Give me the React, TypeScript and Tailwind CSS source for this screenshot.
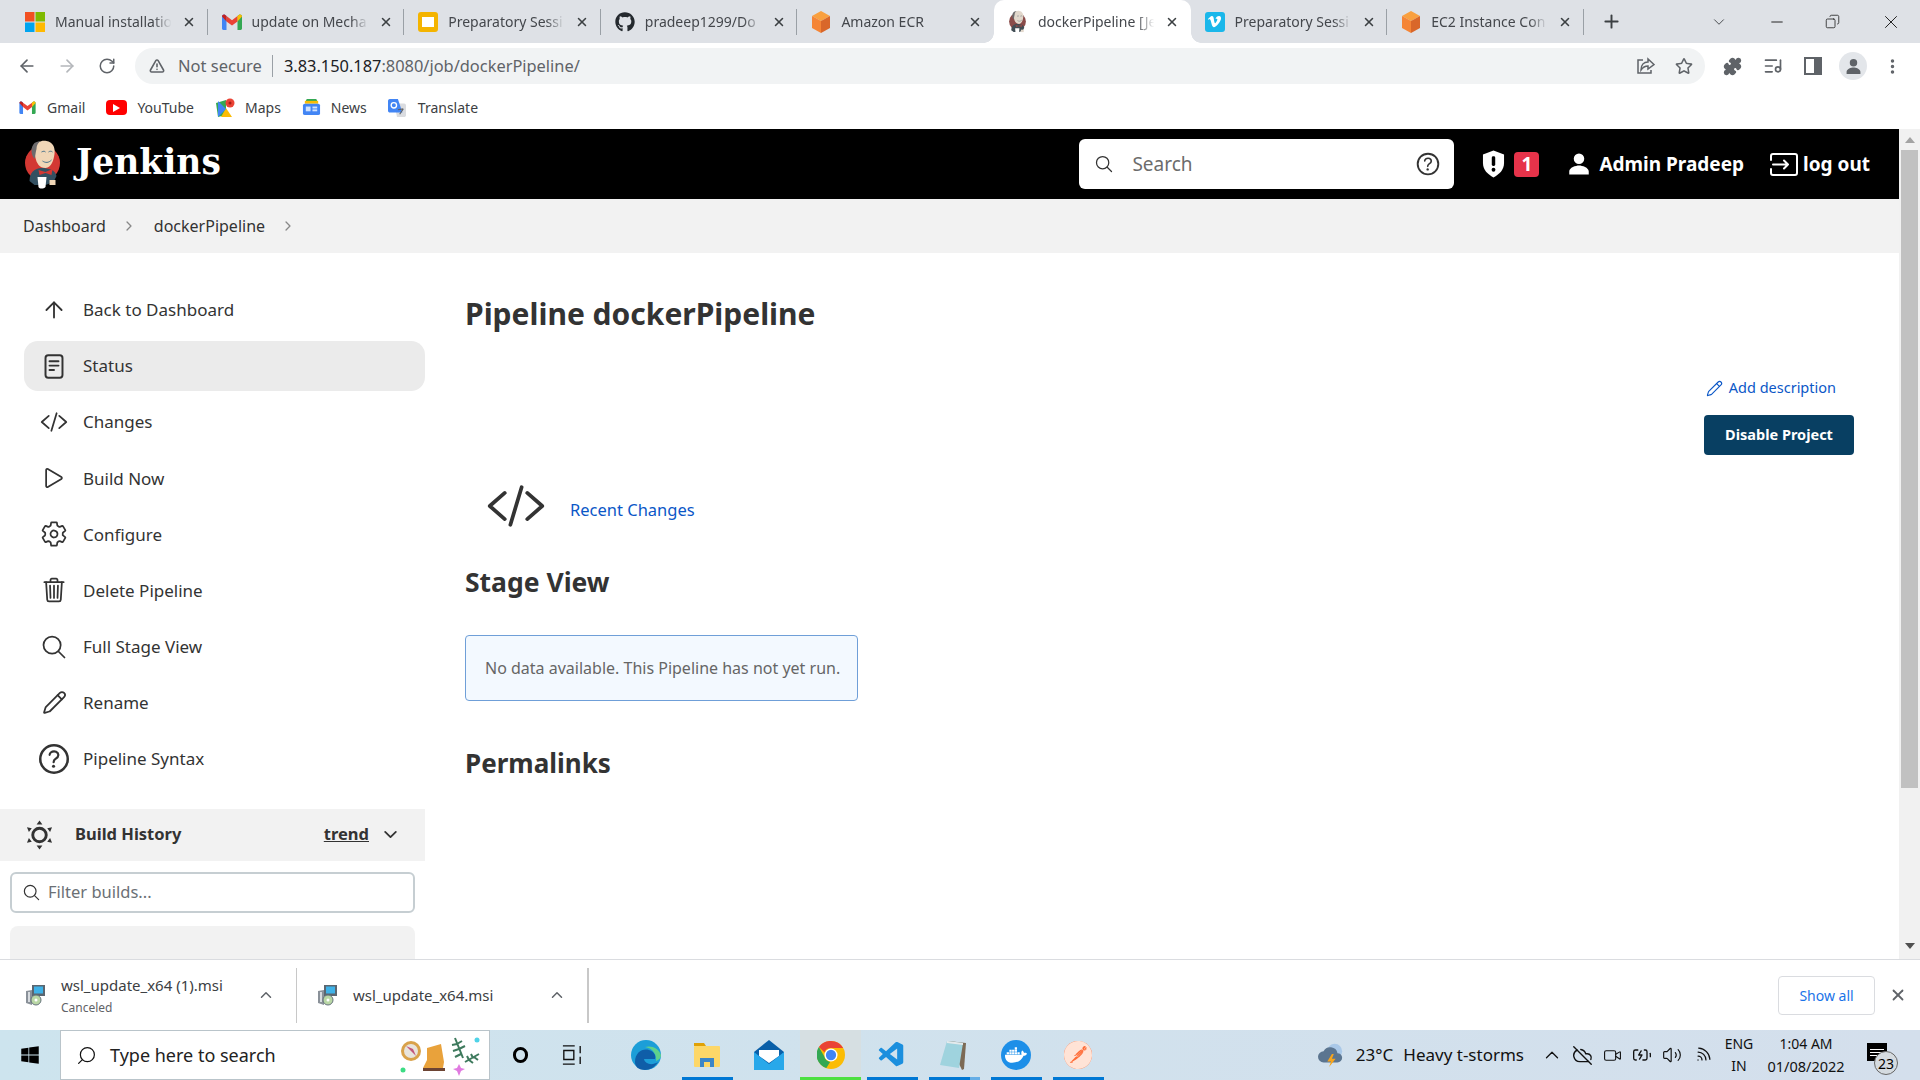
import type { ReactNode } from "react";
import {
  IoCodeSlashOutline,
  IoPlayOutline,
  IoSettingsOutline,
  IoTrashOutline,
  IoSearchOutline,
  IoHelpCircleOutline,
  IoPersonSharp,
  IoChevronForward,
  IoChevronDown,
  IoChevronUp,
} from "react-icons/io5";
import { FaGithub, FaVimeoV, FaWindows, FaDocker, FaRegStar } from "react-icons/fa";
import { SiPostman } from "react-icons/si";
import { VscVscode } from "react-icons/vsc";
import {
  ArrowLeft,
  ArrowRight,
  ArrowUp,
  RotateCw,
  X,
  Plus,
  ChevronDown,
  Minus,
  Copy,
  TriangleAlert,
  Pencil,
  Puzzle,
  ListMusic,
  EllipsisVertical,
  ChevronUp,
  CloudOff,
  Video,
  BatteryCharging,
  Volume2,
  Wifi,
  Search,
} from "lucide-react";

function JenkinsHead({ className }: { className?: string }) {
  return (
    <svg viewBox="0 0 36 50" className={className}>
      <circle cx="18" cy="24" r="17.5" fill="#d33833" />
      <path d="M5 42c0-8 5-13 12-13s14 2 15 8l-3 6-8 3H10z" fill="#335061" />
      <path d="M9 9c3-6 8-8 13-7 6 1 9 6 8 13-1 7-3 13-9 14-6 0-9-5-10-10z" fill="#f0d6b7" />
      <path d="M10 20C6 15 6 8 10 4c2-1 4-2 6-2-3 2-4 5-4 8-1 3-1 7-2 10z" fill="#6d6b6d" />
      <path d="M17 13c2-1 3-1 4 0M24 13c1-1 3-1 4 0M18 22c3 2 6 2 9-1" stroke="#49728b" strokeWidth="1" fill="none" />
      <path d="M14 31l7 2 7-3-1 6-6-2-6 2z" fill="#d33833" />
      <path d="M13 38h9l-1 10c-2 2-6 2-7 0z" fill="#fff" />
      <path d="M25 41h6v5h-6z" fill="#f0d6b7" />
    </svg>
  );
}

function AwsBox() {
  return (
    <svg viewBox="0 0 20 22" className="w-[20px] h-[22px]">
      <path d="M10 0l9 5-9 5-9-5z" fill="#f9a03f" />
      <path d="M1 5l9 5v12l-9-5z" fill="#f58536" />
      <path d="M19 5l-9 5v12l9-5z" fill="#d9672a" />
    </svg>
  );
}

function MsLogo() {
  return (
    <svg viewBox="0 0 20 20" className="w-[20px] h-[20px]">
      <rect width="9.5" height="9.5" fill="#f25022" />
      <rect x="10.5" width="9.5" height="9.5" fill="#7fba00" />
      <rect y="10.5" width="9.5" height="9.5" fill="#00a4ef" />
      <rect x="10.5" y="10.5" width="9.5" height="9.5" fill="#ffb900" />
    </svg>
  );
}

function GmailIcon({ className }: { className?: string }) {
  return (
    <svg viewBox="0 0 20 16" className={className}>
      <path d="M0 2.500C0 .6 2 0 3.200 1L4.500 2v14H1.400C.6 16 0 15.400 0 14.600z" fill="#4285f4" />
      <path d="M20 2.500C20 .6 18 0 16.800 1L15.500 2v14h3.100c.8 0 1.400-.6 1.400-1.400z" fill="#34a853" />
      <path d="M4.500 2L10 6.200 15.500 2v5.500L10 11.600 4.500 7.500z" fill="#ea4335" />
      <path d="M0 2.500L4.500 7.500V2L3.200 1C2 0 0 .6 0 2.500z" fill="#c5221f" />
      <path d="M20 2.500L15.500 7.500V2l1.300-1C18 0 20 .6 20 2.500z" fill="#fbbc04" />
    </svg>
  );
}

function SlidesIcon() {
  return (
    <svg viewBox="0 0 20 20" className="w-[20px] h-[20px]">
      <rect width="20" height="20" rx="3" fill="#f4b400" />
      <rect x="4" y="5" width="12" height="10" fill="#fff" />
    </svg>
  );
}

const tabs: { title: string; icon: ReactNode; active?: boolean; noSep?: boolean }[] = [
  { title: "Manual installatio", icon: <MsLogo /> },
  { title: "update on Mecha", icon: <GmailIcon className="w-[20px] h-[16px]" /> },
  { title: "Preparatory Sessi", icon: <SlidesIcon /> },
  { title: "pradeep1299/Do", icon: <FaGithub className="text-[20px] text-[#24292e]" /> },
  { title: "Amazon ECR", icon: <AwsBox />, noSep: true },
  { title: "dockerPipeline [Je", icon: <JenkinsHead className="w-[19px] h-[24px] grayscale-[60%]" />, active: true, noSep: true },
  {
    title: "Preparatory Sessi",
    icon: (
      <span className="w-[20px] h-[20px] rounded-[3px] bg-[#1ab7ea] flex items-center justify-center">
        <FaVimeoV className="text-[15px] text-white" />
      </span>
    ),
  },
  { title: "EC2 Instance Con", icon: <AwsBox /> },
];

function Tab({ title, icon, active, noSep }: { title: string; icon: ReactNode; active?: boolean; noSep?: boolean }) {
  return (
    <div className={active ? "relative w-[196.6px] h-[43px] shrink-0 bg-white rounded-t-[10px]" : "relative w-[196.6px] h-[43px] shrink-0"}>
      <div className="flex items-center h-full pl-[14px]">
        <span className="w-[20px] flex justify-center shrink-0">{icon}</span>
        <span className="ml-[10px] w-[120px] whitespace-nowrap text-[14px] text-[#44474c] [mask-image:linear-gradient(90deg,#000_82%,transparent_97%)]">
          {title}
        </span>
        <X size={14} strokeWidth={2.6} className="ml-[7px] text-[#3c4043]" />
      </div>
      {!noSep && <span className="absolute right-0 top-[9px] h-[26px] w-px bg-[#9aa0a6]" />}
      {active && (
        <>
          <span className="absolute left-[-10px] bottom-0 w-[10px] h-[10px] bg-[radial-gradient(circle_at_0_0,#dee1e6_9.5px,#fff_10px)]" />
          <span className="absolute right-[-10px] bottom-0 w-[10px] h-[10px] bg-[radial-gradient(circle_at_100%_0,#dee1e6_9.5px,#fff_10px)]" />
        </>
      )}
    </div>
  );
}

function TabStrip() {
  return (
    <div className="h-[43px] bg-[#dee1e6] flex items-center pl-[11px]">
      {tabs.map((t, i) => (
        <Tab key={i} {...t} />
      ))}
      <Plus size={21} strokeWidth={2.2} className="ml-[17px] text-[#3c4043]" />
      <ChevronDown size={18} strokeWidth={1.2} className="ml-[88px] text-[#3c4043]" />
      <Minus size={18} strokeWidth={1.2} className="ml-[40px] text-[#111]" />
      <Copy size={15} strokeWidth={1.2} className="ml-[39px] text-[#111] scale-x-[-1]" />
      <X size={22} strokeWidth={1} className="ml-[40px] text-[#111]" />
    </div>
  );
}

function Toolbar() {
  return (
    <div className="h-[46px] bg-white flex items-center pl-[17px] text-[#5f6368]">
      <ArrowLeft size={20} strokeWidth={2} />
      <ArrowRight size={20} strokeWidth={2} className="ml-[20px] text-[#b4b7bb]" />
      <RotateCw size={18} strokeWidth={2} className="ml-[21px]" />
      <div className="ml-[19px] w-[1570px] h-[36px] rounded-full bg-[#f1f3f4] flex items-center pl-[14px]">
        <TriangleAlert size={16} strokeWidth={2.4} className="text-[#5f6368]" />
        <span className="ml-[13px] text-[16.5px] text-[#5f6368]">Not secure</span>
        <span className="ml-[10px] h-[22px] w-px bg-[#9aa0a6]" />
        <span className="ml-[11px] text-[16.4px] text-[#202124]">
          3.83.150.187<span className="text-[#5f6368]">:8080/job/dockerPipeline/</span>
        </span>
        <svg viewBox="0 0 20 20" className="ml-auto w-[20px] h-[20px]" fill="none" stroke="#5f6368" strokeWidth="1.500">
          <path d="M8 4H3v13h13v-3" />
          <path d="M6 14c0-5 3-8 7-8V3l6 5.500L13 13v-3c-3 0-5 1-7 4z" />
        </svg>
        <FaRegStar className="ml-[20px] mr-[12px] text-[18px]" />
      </div>
      <Puzzle size={19} strokeWidth={2} fill="#5f6368" className="ml-[18px]" />
      <ListMusic size={20} strokeWidth={2} className="ml-[21px]" />
      <svg viewBox="0 0 18 18" className="ml-[21px] w-[18px] h-[18px]">
        <path fillRule="evenodd" d="M0 0h18v18H0zM2 2v14h8V2z" fill="#5f6368" />
      </svg>
      <span className="ml-[17px] w-[28px] h-[28px] rounded-full bg-[#e3e6ea] flex items-center justify-center">
        <IoPersonSharp className="text-[17px] text-[#5f6368]" />
      </span>
      <EllipsisVertical size={19} strokeWidth={2.4} className="ml-[16px]" />
    </div>
  );
}

function Bookmarks() {
  return (
    <div className="h-[40px] pb-[3px] bg-white flex items-center pl-[19px] gap-[21px] text-[14px] text-[#3c4043]">
      <div className="flex items-center gap-[11px]">
        <GmailIcon className="w-[17px] h-[13px]" />
        <span>Gmail</span>
      </div>
      <div className="flex items-center gap-[10px]">
        <span className="w-[21px] h-[15px] rounded-[4px] bg-[#ff0000] flex items-center justify-center">
          <span className="border-l-[7px] border-l-white border-y-[4px] border-y-transparent" />
        </span>
        <span>YouTube</span>
      </div>
      <div className="flex items-center gap-[10px]">
        <svg viewBox="0 0 20 20" className="w-[20px] h-[20px]">
          <path d="M1 5l10-3v15l-8 2z" fill="#34a853" />
          <path d="M11 10l6 9H6z" fill="#fbbc04" />
          <path d="M3 3l8 8-8 8z" fill="#4285f4" />
          <circle cx="15" cy="5" r="4.500" fill="#ea4335" />
          <circle cx="15" cy="5" r="1.500" fill="#a51d14" />
        </svg>
        <span>Maps</span>
      </div>
      <div className="flex items-center gap-[10px]">
        <svg viewBox="0 0 20 20" className="w-[19px] h-[19px]">
          <path d="M5 1h10l2 4H3z" fill="#34a853" />
          <path d="M3 3h14v3H3z" fill="#fbbc04" />
          <rect x="1" y="6" width="18" height="12" rx="2" fill="#4285f4" />
          <rect x="4" y="9" width="5" height="5" fill="#cfe2ff" />
          <rect x="11" y="9" width="5" height="2" fill="#cfe2ff" />
          <rect x="11" y="12" width="5" height="2" fill="#cfe2ff" />
        </svg>
        <span>News</span>
      </div>
      <div className="flex items-center gap-[12px]">
        <svg viewBox="0 0 20 20" className="w-[18px] h-[18px]">
          <path d="M7 5h11c1 0 2 1 2 2v11c0 1-1 2-2 2H10z" fill="#dadce0" />
          <path d="M2 0h9l5 15H2c-1 0-2-1-2-2V2c0-1 1-2 2-2z" fill="#4285f4" />
          <circle cx="6.500" cy="7" r="3" fill="none" stroke="#fff" strokeWidth="1.500" />
          <path d="M11 12l6-1M13 17l4-6" stroke="#5f6368" strokeWidth="1.200" />
        </svg>
        <span>Translate</span>
      </div>
    </div>
  );
}

function LogoutIcon() {
  return (
    <svg viewBox="0 0 28 23" className="w-[28px] h-[23px]" fill="none" stroke="#fff" strokeWidth="2" strokeLinecap="round" strokeLinejoin="round">
      <path d="M1 7V3c0-1 1-2 2-2h22c1 0 2 1 2 2v17c0 1-1 2-2 2H3c-1 0-2-1-2-2v-4" />
      <path d="M3 11.500h15M14 7.500l4 4-4 4" />
    </svg>
  );
}

function JenkinsHeader() {
  return (
    <header className="h-[70px] bg-black flex items-center pl-[24px] text-white">
      <JenkinsHead className="w-[37px] h-[50px]" />
      <span className="ml-[15px] mb-[4px] font-['DejaVu_Serif',serif] font-bold text-[34.5px] leading-none">Jenkins</span>
      <div className="ml-auto w-[375px] h-[50px] bg-white rounded-[6px] flex items-center pl-[15px] pr-[11px] text-[#333]">
        <IoSearchOutline className="text-[20px]" />
        <span className="ml-[18px] pt-[1px] text-[19px] text-[#6c6c6c]">Search</span>
        <IoHelpCircleOutline className="ml-auto text-[30px]" />
      </div>
      <svg viewBox="0 0 24 28" className="ml-[28px] w-[23px] h-[28px]">
        <path d="M12 0l11 4v9c0 7-5 12-11 15C6 25 1 20 1 13V4z" fill="#fff" />
        <rect x="10.200" y="6" width="3.600" height="10" rx="1.500" fill="#000" />
        <circle cx="12" cy="20" r="2" fill="#000" />
      </svg>
      <span className="ml-[9px] w-[25px] h-[25px] rounded-[4px] bg-[#e6334a] flex items-center justify-center text-[19px] font-bold leading-none">1</span>
      <IoPersonSharp className="ml-[28px] text-[24px]" />
      <span className="ml-[8px] text-[19px] font-bold">Admin Pradeep</span>
      <span className="ml-[26px]">
        <LogoutIcon />
      </span>
      <span className="ml-[5px] mr-[29px] text-[19px] font-bold">log out</span>
    </header>
  );
}

function Breadcrumbs() {
  return (
    <div className="h-[54px] bg-[#f2f2f2] flex items-center pl-[23px] text-[16px] text-[#333]">
      <span>Dashboard</span>
      <IoChevronForward className="ml-[16px] text-[14px] text-[#888]" />
      <span className="ml-[18px]">dockerPipeline</span>
      <IoChevronForward className="ml-[16px] text-[14px] text-[#888]" />
    </div>
  );
}

function StatusIcon() {
  return (
    <svg viewBox="0 0 22 28" className="w-[20px] h-[25px]" fill="none" stroke="#333" strokeWidth="2.200" strokeLinecap="round">
      <rect x="1.500" y="1.500" width="19" height="25" rx="3" />
      <path d="M6 8h10M6 13h10M6 18h5" />
    </svg>
  );
}

const navItems: { label: string; icon: ReactNode; active?: boolean }[] = [
  { label: "Back to Dashboard", icon: <ArrowUp size={26} strokeWidth={1.7} /> },
  { label: "Status", icon: <StatusIcon />, active: true },
  { label: "Changes", icon: <IoCodeSlashOutline /> },
  { label: "Build Now", icon: <IoPlayOutline /> },
  { label: "Configure", icon: <IoSettingsOutline /> },
  { label: "Delete Pipeline", icon: <IoTrashOutline /> },
  { label: "Full Stage View", icon: <IoSearchOutline /> },
  { label: "Rename", icon: <Pencil size={25} strokeWidth={1.7} /> },
  { label: "Pipeline Syntax", icon: <IoHelpCircleOutline className="text-[40px] shrink-0" /> },
];

function Sidebar() {
  return (
    <aside className="w-[425px] shrink-0 pt-[32px]">
      <nav className="ml-[24px] flex flex-col gap-[6.1px]">
        {navItems.map((item) => (
          <div
            key={item.label}
            className={
              item.active
                ? "h-[50px] rounded-[14px] bg-[#ebebeb] flex items-center pl-[15px] text-[17px] text-[#333]"
                : "h-[50px] rounded-[14px] flex items-center pl-[15px] text-[17px] text-[#333]"
            }
          >
            <span className="w-[30px] flex justify-center text-[28px]">{item.icon}</span>
            <span className="ml-[14px]">{item.label}</span>
          </div>
        ))}
      </nav>
      <div className="mt-[25px] h-[52px] bg-[#f2f2f2] flex items-center pl-[26px] text-[16.5px] font-bold text-[#333]">
        <svg viewBox="0 0 28 30" className="w-[27px] h-[30px]" fill="#333">
          <circle cx="14" cy="15" r="7" fill="none" stroke="#333" strokeWidth="3" />
          <path d="M14 0l3 4h-6zM14 30l-3-4h6zM1 7l5 1-3 4zM27 7l-5 1 3 4zM1 23l2-5 3 4zM27 23l-2-5-3 4z" />
        </svg>
        <span className="ml-[22px]">Build History</span>
        <span className="ml-auto underline">trend</span>
        <IoChevronDown className="ml-[12px] mr-[25px] text-[19px]" />
      </div>
      <div className="mx-[10px] mt-[11px] h-[41px] rounded-[6px] border-2 border-[#c6ced2] flex items-center pl-[10px] text-[16.5px] text-[#6b7075]">
        <IoSearchOutline className="text-[19px] text-[#333]" />
        <span className="ml-[7px]">Filter builds...</span>
      </div>
      <div className="mx-[10px] mt-[13px] h-[60px] rounded-t-[8px] bg-[#f2f2f2]" />
    </aside>
  );
}

function MainContent() {
  return (
    <main className="flex-1 pl-[40px] pr-[45px] text-[#333]">
      <h1 className="mt-[41px] h-[40px] leading-[40px] text-[30px] font-bold">Pipeline dockerPipeline</h1>
      <div className="mt-[40px] flex flex-col items-end">
        <div className="h-[28px] mr-[18px] flex items-center text-[14.5px] text-[#0b57c7]">
          <Pencil size={17} strokeWidth={1.6} />
          <span className="ml-[6px]">Add description</span>
        </div>
        <button className="mt-[13px] w-[150px] h-[40px] rounded-[4px] bg-[#083f62] text-white text-[14.5px] font-bold">Disable Project</button>
      </div>
      <div className="mt-[30px] flex h-[42px] items-center">
        <IoCodeSlashOutline className="ml-[21px] text-[60px]" />
        <span className="ml-[24px] pt-[8px] text-[16.5px] text-[#0b57c7]">Recent Changes</span>
      </div>
      <h2 className="mt-[37px] h-[36px] leading-[36px] text-[26.500px] font-bold">Stage View</h2>
      <div className="mt-[35px] w-[393px] h-[66px] rounded-[4px] border border-[#6f9fd8] bg-[#f3f9ff] flex items-center pl-[19px] text-[16px] text-[#666]">
        No data available. This Pipeline has not yet run.
      </div>
      <h2 className="mt-[44px] h-[36px] leading-[36px] text-[26px] font-bold">Permalinks</h2>
    </main>
  );
}

function Scrollbar() {
  return (
    <div className="w-[21px] shrink-0 bg-[#f1f1f1] flex flex-col items-center">
      <span className="mt-[8px] border-b-[6px] border-b-[#a3a3a3] border-x-[5px] border-x-transparent" />
      <span className="mt-[7px] w-[17px] h-[638px] bg-[#c1c1c1]" />
      <span className="mt-[155px] border-t-[6px] border-t-[#505050] border-x-[5px] border-x-transparent" />
    </div>
  );
}

function MsiIcon() {
  return (
    <svg viewBox="0 0 20 22" className="w-[20px] h-[22px]">
      <path d="M1 7l6-1v15l-6-2z" fill="#8a9199" />
      <path d="M3 8h2v10H3z" fill="#d7dbdf" />
      <rect x="7" y="1" width="13" height="11" fill="#5b6670" />
      <rect x="9" y="2.500" width="9" height="7" fill="#3fb2e8" />
      <circle cx="11" cy="16" r="5" fill="#b9d7a5" stroke="#66737c" />
      <circle cx="11" cy="16" r="1.500" fill="#fff" />
    </svg>
  );
}

function DownloadBar() {
  return (
    <div className="h-[71px] bg-white border-t border-[#dadce0] flex items-center">
      <div className="w-[296px] flex items-center pl-[25px]">
        <MsiIcon />
        <div className="ml-[16px] w-[197px]">
          <div className="text-[15px] leading-[20px] text-[#3c4043]">wsl_update_x64 (1).msi</div>
          <div className="mt-[5px] text-[12px] leading-[16px] text-[#5f6368]">Canceled</div>
        </div>
        <IoChevronUp className="text-[16px] text-[#5f6368]" />
      </div>
      <span className="h-[55px] w-px bg-[#c8c8c8]" />
      <div className="w-[290px] flex items-center pl-[20px]">
        <MsiIcon />
        <span className="ml-[16px] w-[196px] text-[15px] text-[#3c4043]">wsl_update_x64.msi</span>
        <IoChevronUp className="text-[16px] text-[#5f6368]" />
      </div>
      <span className="h-[55px] w-[2px] bg-[#c8c8c8]" />
      <div className="ml-auto w-[97px] h-[39px] rounded-[4px] border border-[#dadce0] flex items-center justify-center text-[14px] text-[#1a73e8]">
        Show all
      </div>
      <X size={18} strokeWidth={2.4} className="ml-[14px] mr-[13px] text-[#5f6368]" />
    </div>
  );
}

function SearchArt() {
  return (
    <svg viewBox="0 0 84 42" className="w-[84px] h-[42px]">
      <circle cx="12" cy="17" r="10" fill="#d9a24a" />
      <circle cx="12" cy="17" r="7" fill="#e8e4dc" />
      <path d="M7 12l10 10-3-7z" fill="#c2557a" />
      <path d="M28 14l14-4 3 18 -1 6H24l4-8z" fill="#e9a23b" />
      <path d="M24 34h22v3H24z" fill="#6d4433" />
      <path d="M56 4l8 20M58 10l-5 1M60 15l-6 2M62 20l-6 3M58 10l5-3M60 15l6-3" stroke="#3e7a5d" strokeWidth="2" />
      <path d="M66 28l14-8M70 26l-2-4M74 24l-2-4M70 26l4 3M75 23l4 3" stroke="#3e7a5d" strokeWidth="2" />
      <path d="M60 30l2 4 4 1-4 2-2 5-2-5-4-2 4-1z" fill="#e07ae0" />
      <circle cx="4" cy="36" r="2.500" fill="#3ddc84" />
      <circle cx="78" cy="6" r="2.500" fill="#4fd3e8" />
    </svg>
  );
}

function EdgeIcon() {
  return (
    <svg viewBox="0 0 30 30" className="w-[30px] h-[30px]">
      <circle cx="15" cy="15" r="15" fill="#1c9ed8" />
      <path d="M4 22c0-10 8-14 14-12 6 2 7 6 6 9H13c1 5 8 7 14 3-3 5-8 8-13 8-6 0-10-3-10-8z" fill="#0f5ea8" />
      <path d="M14 7c6-2 14 1 16 8 0 3-2 5-5 6 1-6-3-13-11-14z" fill="#5fd18c" />
    </svg>
  );
}

function ExplorerIcon() {
  return (
    <svg viewBox="0 0 28 28" className="w-[28px] h-[28px]">
      <path d="M1 2h10l2 3H1z" fill="#e0a106" />
      <rect x="1" y="5" width="26" height="21" rx="1" fill="#fdd768" />
      <path d="M7 26v-9h14v9h-4v-5h-6v5z" fill="#3c86c7" />
    </svg>
  );
}

function MailIcon() {
  return (
    <svg viewBox="0 0 30 30" className="w-[30px] h-[30px]">
      <path d="M15 0L30 12v18H0V12z" fill="#0a5fa8" />
      <path d="M5 10h20v6l-10 7L5 16z" fill="#fff" />
      <path d="M0 12l15 12 15-12v18H0z" fill="#28a8ea" />
    </svg>
  );
}

function ChromeIcon() {
  return (
    <svg viewBox="0 0 30 30" className="w-[28px] h-[28px]">
      <circle cx="15" cy="15" r="15" fill="#fbbc04" />
      <path d="M15 0a15 15 0 0113 7.500H15A7.500 7.500 0 008 12L2 6.500A15 15 0 0115 0z" fill="#ea4335" />
      <path d="M2 6.500L8 17a7.500 7.500 0 006 5.500L10 29A15 15 0 012 6.500z" fill="#34a853" />
      <circle cx="15" cy="15" r="7" fill="#fff" />
      <circle cx="15" cy="15" r="5.500" fill="#4285f4" />
    </svg>
  );
}

function NotepadIcon() {
  return (
    <svg viewBox="0 0 30 30" className="w-[30px] h-[30px]">
      <path d="M9 1l18 2-2 26-2 1z" fill="#7c6a55" />
      <path d="M8 1l16 2-4 25L1 25z" fill="#9fd3de" />
      <path d="M8 1l16 2v2L8 3z" fill="#e4eaec" />
    </svg>
  );
}

const taskbarApps: { icon: ReactNode; bar: string; box: string }[] = [
  { icon: <EdgeIcon />, bar: "", box: "w-[61px]" },
  { icon: <ExplorerIcon />, bar: "bg-[#0078d4] w-[51px]", box: "w-[62px]" },
  { icon: <MailIcon />, bar: "", box: "w-[62px]" },
  { icon: <ChromeIcon />, bar: "bg-[#4ee03f] w-[61px]", box: "w-[61px] bg-[#d6dfe2]" },
  { icon: <VscVscode className="text-[30px] text-[#1b8fde]" />, bar: "bg-[#0078d4] w-[51px]", box: "w-[62px]" },
  { icon: <NotepadIcon />, bar: "bg-[linear-gradient(90deg,#0078d4_80%,#66aee6_80%)] w-[51px]", box: "w-[62px]" },
  {
    icon: (
      <span className="w-[30px] h-[30px] rounded-full bg-[#1d8fe8] flex items-center justify-center">
        <FaDocker className="text-[22px] text-white" />
      </span>
    ),
    bar: "bg-[#0078d4] w-[51px]",
    box: "w-[62px]",
  },
  {
    icon: (
      <span className="w-[28px] h-[28px] rounded-full bg-[#ff6c37] flex items-center justify-center">
        <SiPostman className="text-[28px] text-[#ffe3d6]" />
      </span>
    ),
    bar: "bg-[#0078d4] w-[51px]",
    box: "w-[62px]",
  },
];

function Taskbar() {
  return (
    <div className="h-[50px] bg-[linear-gradient(90deg,#cde4ee,#d4dfec)] flex items-center text-[#111]">
      <span className="w-[60px] flex justify-center">
        <FaWindows className="text-[20px] text-black" />
      </span>
      <div className="w-[430px] h-[50px] bg-white border border-[#b9c4ca] flex items-center pl-[15px]">
        <Search size={21} strokeWidth={1.4} className="scale-x-[-1]" />
        <span className="ml-[13px] text-[18px] text-[#222]">Type here to search</span>
        <span className="ml-auto mr-[6px]">
          <SearchArt />
        </span>
      </div>
      <span className="ml-[23px] w-[15px] h-[16px] rounded-full border-[3px] border-black" />
      <svg viewBox="0 0 22 22" className="ml-[34px] w-[20px] h-[20px]" fill="none" stroke="#111" strokeWidth="1.500">
        <path d="M1 1h13M1 21h13M2 6h11v10H2zM20 1v8M20 13v8" />
      </svg>
      <div className="ml-[33px] flex">
        {taskbarApps.map((app, i) => (
          <div key={i} className={"relative h-[50px] flex items-center justify-center " + app.box}>
            {app.icon}
            {app.bar && <span className={"absolute bottom-0 h-[3px] " + app.bar} />}
          </div>
        ))}
      </div>
      <svg viewBox="0 0 28 28" className="ml-auto w-[26px] h-[26px]">
        <circle cx="18" cy="10" r="8" fill="#a9c8e8" />
        <path d="M6 22a6 6 0 010-12 8 8 0 0115 2 5 5 0 010 10z" fill="#5b7590" />
        <path d="M15 13l-5 8h4l-2 6 7-9h-4l2-5z" fill="#f7a51c" />
      </svg>
      <span className="ml-[12px] text-[17px]">23°C</span>
      <span className="ml-[10px] text-[17px]">Heavy t-storms</span>
      <ChevronUp size={22} strokeWidth={1.4} className="ml-[17px]" />
      <CloudOff size={21} strokeWidth={1.6} className="ml-[9px]" />
      <Video size={19} strokeWidth={1.4} className="ml-[10px]" />
      <BatteryCharging size={20} strokeWidth={1.6} className="ml-[10px]" />
      <Volume2 size={20} strokeWidth={1.4} className="ml-[10px]" />
      <Wifi size={19} strokeWidth={1.6} className="ml-[11px] rotate-[45deg] origin-center" />
      <div className="ml-[10px] w-[34px] text-center text-[14px] leading-[22px]">
        <div>ENG</div>
        <div>IN</div>
      </div>
      <div className="ml-[10px] w-[80px] text-center text-[14px] leading-[23px]">
        <div>1:04 AM</div>
        <div className="text-[14.5px] whitespace-nowrap">01/08/2022</div>
      </div>
      <div className="relative ml-[21px] mr-[33px] w-[20px] h-[18px] bg-black mb-[6px] flex flex-col gap-[2px] justify-center px-[3px]">
        <span className="h-px bg-white" />
        <span className="h-px bg-white" />
        <span className="h-px bg-white" />
        <span className="absolute left-[7px] top-[8px] w-[24px] h-[24px] rounded-full border border-[#666] bg-[#d5dbe0] flex items-center justify-center text-[14px] text-black">
          23
        </span>
      </div>
    </div>
  );
}

export default function App() {
  return (
    <div className="w-[1920px] h-[1080px] overflow-hidden flex flex-col font-['Noto_Sans',sans-serif]">
      <TabStrip />
      <Toolbar />
      <Bookmarks />
      <div className="flex h-[830px] overflow-hidden">
        <div className="flex-1 min-w-0 flex flex-col">
          <JenkinsHeader />
          <Breadcrumbs />
          <div className="flex flex-1 overflow-hidden">
            <Sidebar />
            <MainContent />
          </div>
        </div>
        <Scrollbar />
      </div>
      <DownloadBar />
      <Taskbar />
    </div>
  );
}
